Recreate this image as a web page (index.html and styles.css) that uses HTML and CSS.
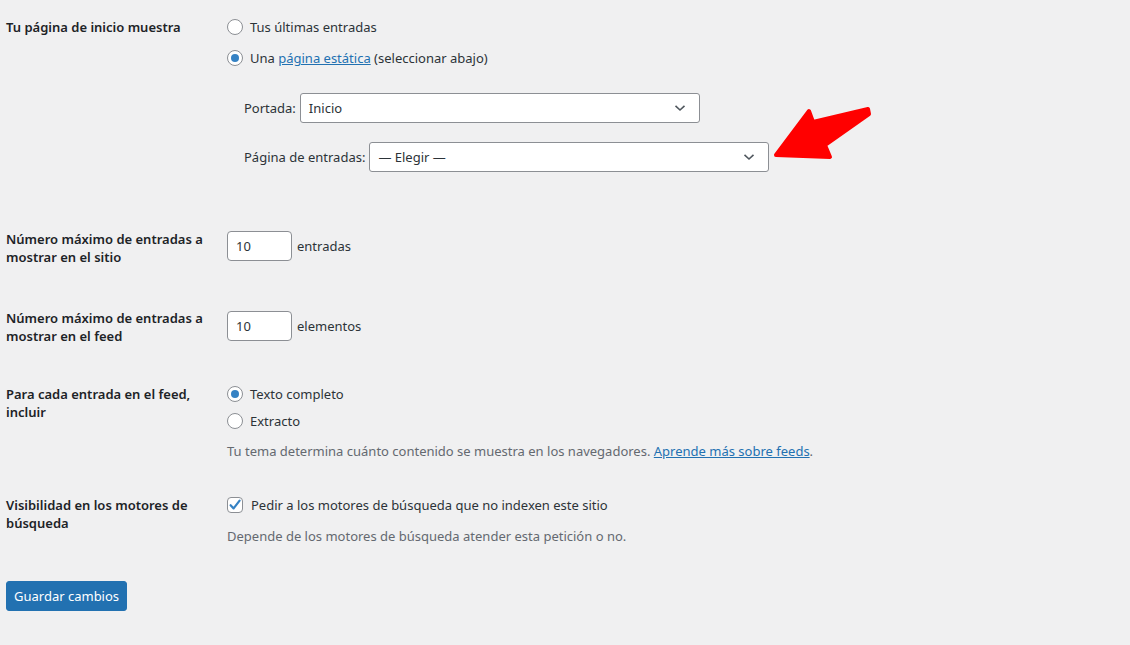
FILE: index.html
```html
<!DOCTYPE html>
<html>
<head>
    <title>Ajustes de lectura</title>
    <link rel="stylesheet" href="styles.css">
</head>
<body>
    <div id="ajustes">
        <div class="row row-front">
            <div class="row-label">Tu página de inicio muestra</div>
            <div class="row-field">
                <div class="option"><span class="radio"></span>Tus últimas entradas</div>
                <div class="option option-gap"><span class="radio checked"></span>Una&nbsp;<a href="#">página estática</a>&nbsp;(seleccionar abajo)</div>
                <div class="static-pages">
                    <div class="page-line">
                        <span>Portada:</span>
                        <div class="select"><span>Inicio</span>
                            <svg width="12" height="8" viewBox="0 0 12 8"><path d="M1.5 1.8 L6 6 L10.5 1.8" fill="none" stroke="#50575e" stroke-width="1.6"/></svg>
                        </div>
                    </div>
                    <div class="page-line page-line-second">
                        <span>Página de entradas:</span>
                        <div class="select"><span>— Elegir —</span>
                            <svg width="12" height="8" viewBox="0 0 12 8"><path d="M1.5 1.8 L6 6 L10.5 1.8" fill="none" stroke="#50575e" stroke-width="1.6"/></svg>
                        </div>
                    </div>
                </div>
            </div>
        </div>

        <div class="row row-posts">
            <div class="row-label">Número máximo de entradas a mostrar en el sitio</div>
            <div class="row-field field-inline field-posts">
                <div class="number">10</div> entradas
            </div>
        </div>

        <div class="row row-feed">
            <div class="row-label">Número máximo de entradas a mostrar en el feed</div>
            <div class="row-field field-inline field-feed">
                <div class="number">10</div> elementos
            </div>
        </div>

        <div class="row row-content">
            <div class="row-label">Para cada entrada en el feed, incluir</div>
            <div class="row-field">
                <div class="option"><span class="radio checked"></span>Texto completo</div>
                <div class="option option-small-gap"><span class="radio"></span>Extracto</div>
                <p class="description">Tu tema determina cuánto contenido se muestra en los navegadores. <a href="#">Aprende más sobre feeds</a>.</p>
            </div>
        </div>

        <div class="row row-visibility">
            <div class="row-label">Visibilidad en los motores de búsqueda</div>
            <div class="row-field">
                <div class="option">
                    <span class="checkbox">
                        <svg width="14" height="14" viewBox="0 0 14 14"><path d="M2.6 7.2 L5.6 10.4 L11.6 2.6" fill="none" stroke="#3582c4" stroke-width="2.2" stroke-linecap="round" stroke-linejoin="round"/></svg>
                    </span>Pedir a los motores de búsqueda que no indexen este sitio
                </div>
                <p class="description description-visibility">Depende de los motores de búsqueda atender esta petición o no.</p>
            </div>
        </div>

        <button class="button-primary">Guardar cambios</button>
    </div>

    <!-- flecha roja encima de la página -->
    <svg class="arrow" width="1130" height="645" viewBox="0 0 1130 645">
        <polygon points="776,155 809,111 813,122 868,109 869,114 825,145 830,157" fill="#ff0000" stroke="#ff0000" stroke-width="4" stroke-linejoin="round"/>
    </svg>
</body>
</html>
```

FILE: styles.css
```css
body {
    margin: 0;
    background-color: #f0f0f1;
    color: #1d2327;
    font-family: "Noto Sans", sans-serif;
    font-size: 13px;
    line-height: 18px;
    position: relative;
    height: 645px;
    overflow: hidden;
}
a {
    color: #2271b1;
    text-decoration: underline;
}
#ajustes {
    padding: 18px 6px 0 6px;
}
.row {
    display: grid;
    grid-template-columns: 221px 1fr;
    align-items: start;
}
.row-label {
    font-weight: 600;
    padding-right: 10px;
}
.row-posts {
    margin-top: 58px;
}
.row-feed {
    margin-top: 43px;
}
.row-content {
    margin-top: 40px;
}
.row-visibility {
    margin-top: 36px;
}
.option {
    display: flex;
    align-items: center;
    height: 18px;
    color: #2c3338;
}
.option-gap {
    margin-top: 13px;
}
.option-small-gap {
    margin-top: 9px;
}
.radio {
    width: 14px;
    height: 14px;
    border: 1px solid #8c8f94;
    border-radius: 50%;
    background-color: #fff;
    margin-right: 7px;
    display: flex;
    align-items: center;
    justify-content: center;
    flex-shrink: 0;
}
.radio.checked::after {
    content: "";
    width: 8px;
    height: 8px;
    border-radius: 50%;
    background-color: #3582c4;
}
.checkbox {
    width: 14px;
    height: 14px;
    border: 1px solid #8c8f94;
    border-radius: 4px;
    background-color: #fff;
    margin-right: 8px;
    display: flex;
    align-items: center;
    justify-content: center;
}
.static-pages {
    margin-top: 26px;
    padding-left: 17px;
}
.page-line {
    display: flex;
    align-items: center;
    gap: 4px;
    color: #2c3338;
}
.page-line-second {
    margin-top: 19px;
}
.select {
    box-sizing: border-box;
    width: 400px;
    height: 30px;
    padding: 0 13px 0 8px;
    background-color: #fff;
    border: 1px solid #8c8f94;
    border-radius: 3px;
    display: flex;
    align-items: center;
    justify-content: space-between;
    font-size: 13px;
    color: #2c3338;
}
.field-inline {
    display: flex;
    align-items: center;
    gap: 5px;
    color: #2c3338;
}
.field-posts {
    margin-top: 1px;
}
.field-feed {
    margin-top: 2px;
}
.number {
    width: 55px;
    height: 28px;
    padding-left: 8px;
    background-color: #fff;
    border: 1px solid #8c8f94;
    border-radius: 4px;
    line-height: 28px;
}
.description {
    margin: 12px 0 0 0;
    color: #646970;
}
.description-visibility {
    margin-top: 13px;
}
.button-primary {
    margin-top: 36px;
    height: 30px;
    padding: 0 7px;
    background-color: #2271b1;
    border: 1px solid #2271b1;
    border-radius: 3px;
    color: #fff;
    font-family: "Noto Sans", sans-serif;
    font-size: 13px;
    cursor: pointer;
}
.arrow {
    position: absolute;
    top: 0;
    left: 0;
    pointer-events: none;
}
```
